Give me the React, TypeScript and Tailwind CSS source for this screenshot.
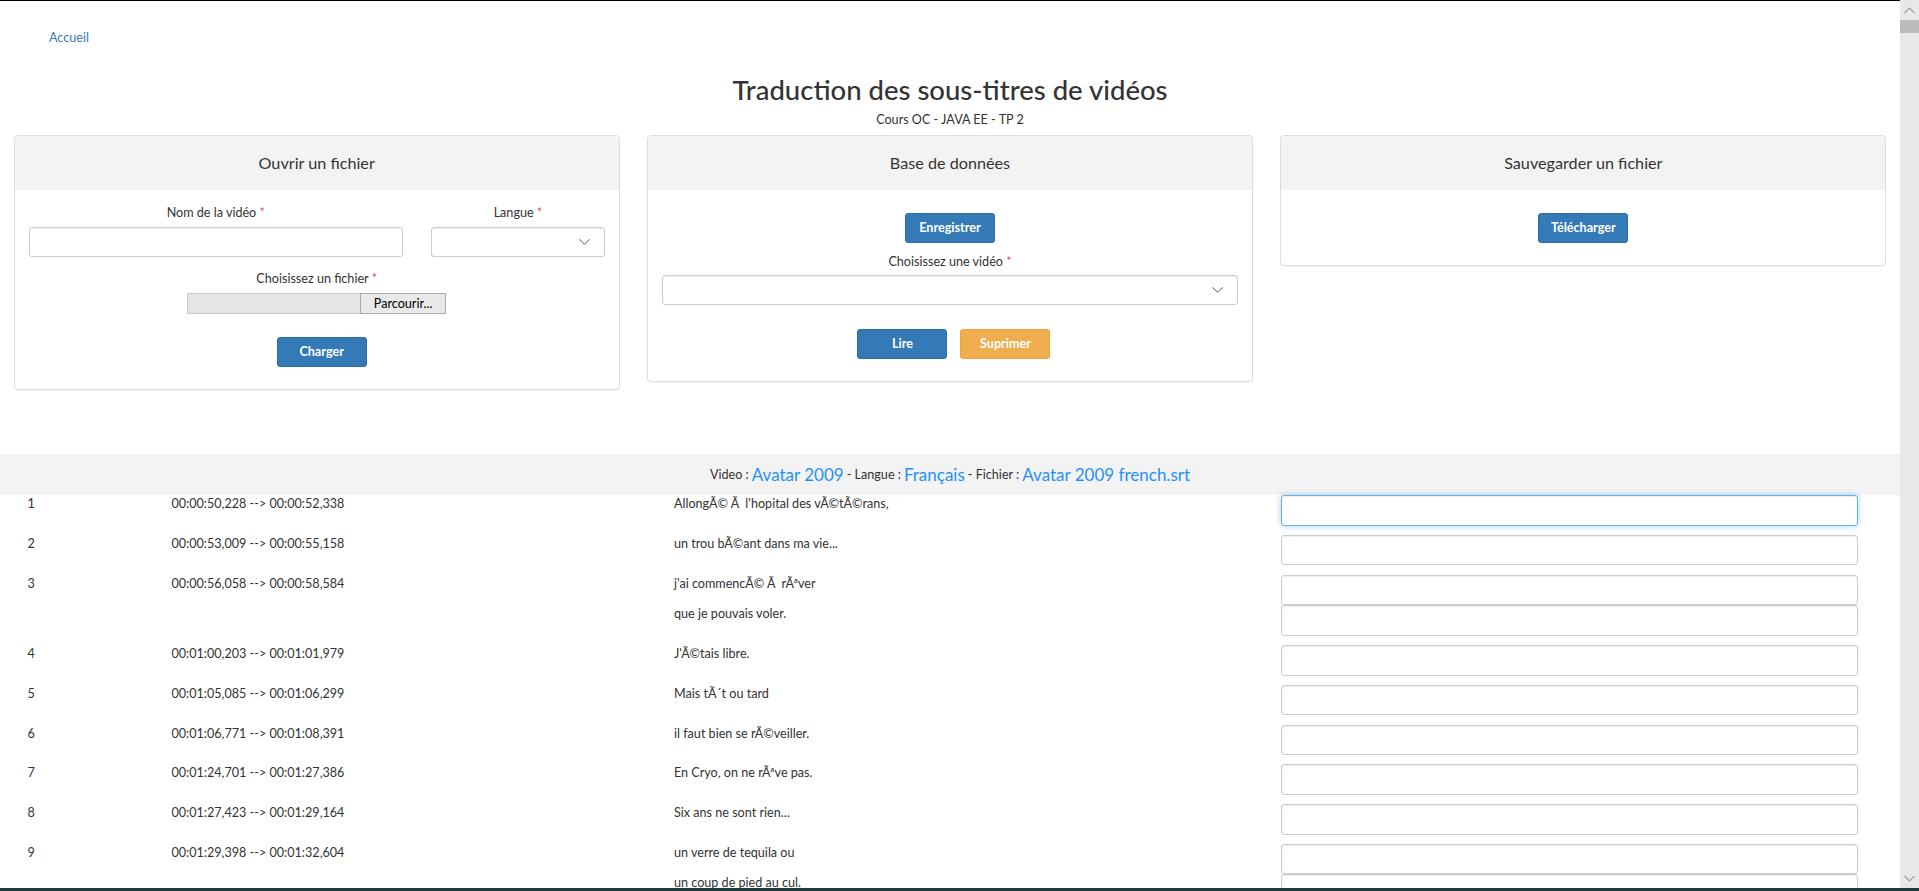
import React from "react";

const rows: { n: number; time: string; lines: string[] }[] = [
  { n: 1, time: "00:00:50,228 --> 00:00:52,338", lines: ["AllongÃ© Ã\u00a0 l'hopital des vÃ©tÃ©rans,"] },
  { n: 2, time: "00:00:53,009 --> 00:00:55,158", lines: ["un trou bÃ©ant dans ma vie..."] },
  { n: 3, time: "00:00:56,058 --> 00:00:58,584", lines: ["j'ai commencÃ© Ã\u00a0 rÃªver", "que je pouvais voler."] },
  { n: 4, time: "00:01:00,203 --> 00:01:01,979", lines: ["J'Ã©tais libre."] },
  { n: 5, time: "00:01:05,085 --> 00:01:06,299", lines: ["Mais tÃ´t ou tard"] },
  { n: 6, time: "00:01:06,771 --> 00:01:08,391", lines: ["il faut bien se rÃ©veiller."] },
  { n: 7, time: "00:01:24,701 --> 00:01:27,386", lines: ["En Cryo, on ne rÃªve pas."] },
  { n: 8, time: "00:01:27,423 --> 00:01:29,164", lines: ["Six ans ne sont rien..."] },
  { n: 9, time: "00:01:29,398 --> 00:01:32,604", lines: ["un verre de tequila ou", "un coup de pied au cul."] },
];

const Chevron = () => (
  <svg width="11" height="7" viewBox="0 0 11 7" className="absolute right-[14px] top-1/2 -translate-y-1/2">
    <path d="M0.5 0.8 L5.5 5.8 L10.5 0.8" fill="none" stroke="#555" strokeWidth="1" />
  </svg>
);

const Star = () => <span className="text-[#d9534f]"> *</span>;

const Btn = ({ children, warn }: { children: React.ReactNode; warn?: boolean }) => (
  <button
    className={
      warn
        ? "w-[90px] h-[30px] rounded-[3px] border border-[#eea236] bg-[#f0ad4e] text-white text-[12.6px] font-bold"
        : "w-[90px] h-[30px] rounded-[3px] border border-[#2e6da4] bg-[#337ab7] text-white text-[12.6px] font-bold"
    }
  >
    {children}
  </button>
);

const CardHeader = ({ title }: { title: string }) => (
  <div className="h-[54px] bg-[#f3f3f3] flex items-center justify-center text-[16.2px] text-[#333] rounded-t-[3px]">
    {title}
  </div>
);

export default function App() {
  return (
    <div
      className="h-[891px] w-full flex flex-col overflow-hidden bg-white text-[#333] text-[12.6px] leading-[18px]"
      style={{ fontFamily: "'Segoe UI', Lato, 'Liberation Sans', sans-serif" }}
    >
      <div className="flex flex-1 min-h-0">
        <div className="w-[1900px] overflow-hidden border-t border-black">
          <div className="pt-[28px] pl-[49px] text-[#337ab7]">Accueil</div>
          <div className="mt-[28px] text-center text-[27.5px] leading-[30px] font-medium">
            Traduction des sous-titres de vidéos
          </div>
          <div className="mt-[6px] text-center">Cours OC - JAVA EE - TP 2</div>

          <div className="mt-[6px] grid grid-cols-3">
            <div className="px-[13.5px]">
              <div className="border border-[#ddd] rounded-[4px] shadow-[0_1px_1px_rgba(0,0,0,0.05)]">
                <CardHeader title="Ouvrir un fichier" />
                <div className="px-[14px] pt-[14px] pb-[22px]">
                  <div className="grid grid-cols-[374.5px_1fr] gap-x-[28px]">
                    <div>
                      <div className="text-center">
                        Nom de la vidéo<Star />
                      </div>
                      <input className="mt-[5px] w-full h-[30px] border border-[#ccc] rounded-[3px] shadow-[inset_0_1px_1px_rgba(0,0,0,0.075)]" />
                    </div>
                    <div>
                      <div className="text-center">
                        Langue<Star />
                      </div>
                      <div className="relative mt-[5px] w-full h-[30px] border border-[#ccc] rounded-[3px] shadow-[inset_0_1px_1px_rgba(0,0,0,0.075)]">
                        <Chevron />
                      </div>
                    </div>
                  </div>
                  <div className="mt-[13px] text-center">
                    Choisissez un fichier<Star />
                  </div>
                  <div className="mt-[5px] flex justify-center">
                    <div className="flex h-[21px] w-[259px]">
                      <div className="w-[173px] bg-[#e6e6e6] border border-[#c8c8c8] border-r-0" />
                      <div className="flex-1 bg-[#e9e9e9] border border-[#adadad] flex items-center justify-center text-black text-[12.6px]">
                        Parcourir...
                      </div>
                    </div>
                  </div>
                  <div className="mt-[23px] flex justify-center pl-[10px]">
                    <Btn>Charger</Btn>
                  </div>
                </div>
              </div>
            </div>

            <div className="px-[13.5px]">
              <div className="border border-[#ddd] rounded-[4px] shadow-[0_1px_1px_rgba(0,0,0,0.05)]">
                <CardHeader title="Base de données" />
                <div className="px-[14px] pt-[23px] pb-[22px]">
                  <div className="flex justify-center">
                    <Btn>Enregistrer</Btn>
                  </div>
                  <div className="mt-[10px] text-center">
                    Choisissez une vidéo<Star />
                  </div>
                  <div className="relative mt-[4px] w-full h-[30px] border border-[#ccc] rounded-[3px] shadow-[inset_0_1px_1px_rgba(0,0,0,0.075)]">
                    <Chevron />
                  </div>
                  <div className="mt-[24px] flex justify-center gap-[13px] pl-[8px]">
                    <Btn>Lire</Btn>
                    <Btn warn>Suprimer</Btn>
                  </div>
                </div>
              </div>
            </div>

            <div className="px-[13.5px]">
              <div className="border border-[#ddd] rounded-[4px] shadow-[0_1px_1px_rgba(0,0,0,0.05)]">
                <CardHeader title="Sauvegarder un fichier" />
                <div className="pt-[23px] pb-[22px] flex justify-center">
                  <Btn>Télécharger</Btn>
                </div>
              </div>
            </div>
          </div>

          <div className="mt-[64px] h-[41px] bg-[#f3f3f3] flex items-center justify-center">
            <span>Video : </span>
            <span className="text-[#1e90ff] text-[17px] mx-[3px]">Avatar 2009</span>
            <span> - Langue : </span>
            <span className="text-[#1e90ff] text-[17px] mx-[3px]">Français</span>
            <span> - Fichier : </span>
            <span className="text-[#1e90ff] text-[17px] ml-[3px]">Avatar 2009 french.srt</span>
          </div>

          <div className="pl-[27.5px]">
            {rows.map((r) => (
              <div key={r.n} className="grid grid-cols-[144px_502.5px_606.5px_577.5px] mb-[9.2px]">
                <div>{r.n}</div>
                <div>{r.time}</div>
                <div>
                  {r.lines.map((l, i) => (
                    <div key={i} className="h-[30.6px]">
                      {l}
                    </div>
                  ))}
                </div>
                <div>
                  {r.lines.map((l, i) => (
                    <input
                      key={i}
                      className={
                        r.n === 1
                          ? "block w-full h-[30.6px] border border-[#66afe9] rounded-[3px] outline-none shadow-[inset_0_1px_1px_rgba(0,0,0,0.075),0_0_6px_rgba(102,175,233,0.6)]"
                          : "block w-full h-[30.6px] border border-[#ccc] rounded-[3px] shadow-[inset_0_1px_1px_rgba(0,0,0,0.075)]"
                      }
                    />
                  ))}
                </div>
              </div>
            ))}
          </div>
        </div>

        <div className="w-[19px] bg-[#e8e8e8] flex flex-col items-center">
          <svg width="11" height="7" viewBox="0 0 11 7" className="mt-[7px]">
            <path d="M0.5 6 L5.5 1 L10.5 6" fill="none" stroke="#a0a0a0" strokeWidth="1.2" />
          </svg>
          <div className="mt-[6px] w-full h-[13px] bg-[#bcbcbc]" />
          <div className="flex-1" />
          <svg width="11" height="7" viewBox="0 0 11 7" className="mb-[6px]">
            <path d="M0.5 1 L5.5 6 L10.5 1" fill="none" stroke="#a0a0a0" strokeWidth="1.2" />
          </svg>
        </div>
      </div>
      <div className="h-[3px] bg-[#1d3b3c]" />
    </div>
  );
}
